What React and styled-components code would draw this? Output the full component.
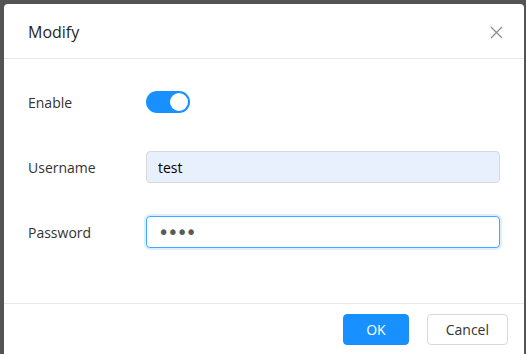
import React, { useState } from 'react'
import styled, { createGlobalStyle } from 'styled-components'

const GlobalStyle = createGlobalStyle`
    html, body {
        margin : 0;
        padding : 0;
        background : #545454;
        font-family : "Open Sans", "Noto Sans", sans-serif;
    }
    * { box-sizing : border-box; }
`

const Overlay = styled.div`
    width : 526px;
    height : 354px;
    padding : 4px 2px 0 4px;
    overflow : hidden;
    background : #545454;
`
const Dialog = styled.div`
    width : 520px;
    height : 380px;
    background : #fff;
    border-radius : 4px;
    display : flex;
    flex-direction : column;
`
const Header = styled.div`
    height : 55px;
    display : flex;
    align-items : center;
    justify-content : space-between;
    padding : 0 20px 0 24px;
    border-bottom : 1px solid #e8e8e8;
`
const Title = styled.div`
    font-size : 16px;
    color : #1f1f1f;
    margin-top : 1px;
`
const Close = styled.button`
    border : none;
    background : none;
    padding : 0;
    width : 16px;
    height : 16px;
    display : flex;
    align-items : center;
    justify-content : center;
    cursor : pointer;
    margin-top : 2px;
`
const Body = styled.div`
    display : flex;
    flex-direction : column;
    gap : 33px;
    padding : 27px 23px 55px 24px;
    border-bottom : 1px solid #e8e8e8;
`
const Row = styled.div`
    display : flex;
    align-items : center;
    height : 32px;
`
const Label = styled.div`
    width : 118px;
    font-size : 14px;
    color : #333;
`
const Switch = styled.button`
    width : 44px;
    height : 22px;
    border-radius : 11px;
    border : none;
    background : ${({ on }) => (on ? '#1890ff' : '#bfbfbf')};
    display : flex;
    align-items : center;
    justify-content : ${({ on }) => (on ? 'flex-end' : 'flex-start')};
    padding : 0 2px;
    cursor : pointer;
`
const Knob = styled.span`
    width : 18px;
    height : 18px;
    border-radius : 50%;
    background : #fff;
`
const Input = styled.input`
    width : 354px;
    height : 32px;
    padding : 0 11px;
    font-family : ${({ dots }) => (dots ? '"DejaVu Sans", sans-serif' : 'inherit')};
    font-size : ${({ dots }) => (dots ? '19px' : '14px')};
    color : ${({ dots }) => (dots ? '#595959' : '#000')};
    border-radius : 4px;
    outline : none;
    background : ${({ filled }) => (filled ? '#e8f0fe' : '#fff')};
    border : 1px solid ${({ active }) => (active ? '#40a9ff' : '#d9d9d9')};
    box-shadow : ${({ active }) => (active ? '0 0 0 2px rgba(24, 144, 255, 0.15)' : 'none')};
    letter-spacing : ${({ dots }) => (dots ? '-2px' : 'normal')};
`
const Footer = styled.div`
    display : flex;
    justify-content : flex-end;
    gap : 18px;
    padding : 10px 16px 0 0;
`
const Button = styled.button`
    height : 31px;
    padding : 0 ${({ primary }) => (primary ? '22px' : '18px')};
    min-width : ${({ primary }) => (primary ? '65px' : '81px')};
    border-radius : 4px;
    font-family : inherit;
    font-size : 14px;
    cursor : pointer;
    background : ${({ primary }) => (primary ? '#1890ff' : '#fff')};
    color : ${({ primary }) => (primary ? '#fff' : '#333')};
    border : 1px solid ${({ primary }) => (primary ? '#1890ff' : '#d9d9d9')};
`

const App = () => {
    const [enabled, setEnabled] = useState(true)
    const [name, setName] = useState('test')
    const [pass, setPass] = useState('test')

    return (
        <>
            <GlobalStyle />
            <Overlay>
                <Dialog>
                    <Header>
                        <Title>Modify</Title>
                        <Close>
                            <svg width="13" height="13" viewBox="0 0 13 13">
                                <path d="M1 1L12 12M12 1L1 12" stroke="#8c8c8c" strokeWidth="1.2" fill="none" />
                            </svg>
                        </Close>
                    </Header>
                    <Body>
                        <Row>
                            <Label>Enable</Label>
                            <Switch on={enabled ? 1 : 0} onClick={() => setEnabled(!enabled)}>
                                <Knob />
                            </Switch>
                        </Row>
                        <Row>
                            <Label>Username</Label>
                            <Input filled={1} value={name} onChange={(e) => setName(e.target.value)} />
                        </Row>
                        <Row>
                            <Label>Password</Label>
                            <Input active={1} dots={1} type="password" value={pass} onChange={(e) => setPass(e.target.value)} />
                        </Row>
                    </Body>
                    <Footer>
                        <Button primary={1}>OK</Button>
                        <Button>Cancel</Button>
                    </Footer>
                </Dialog>
            </Overlay>
        </>
    )
}

export default App
